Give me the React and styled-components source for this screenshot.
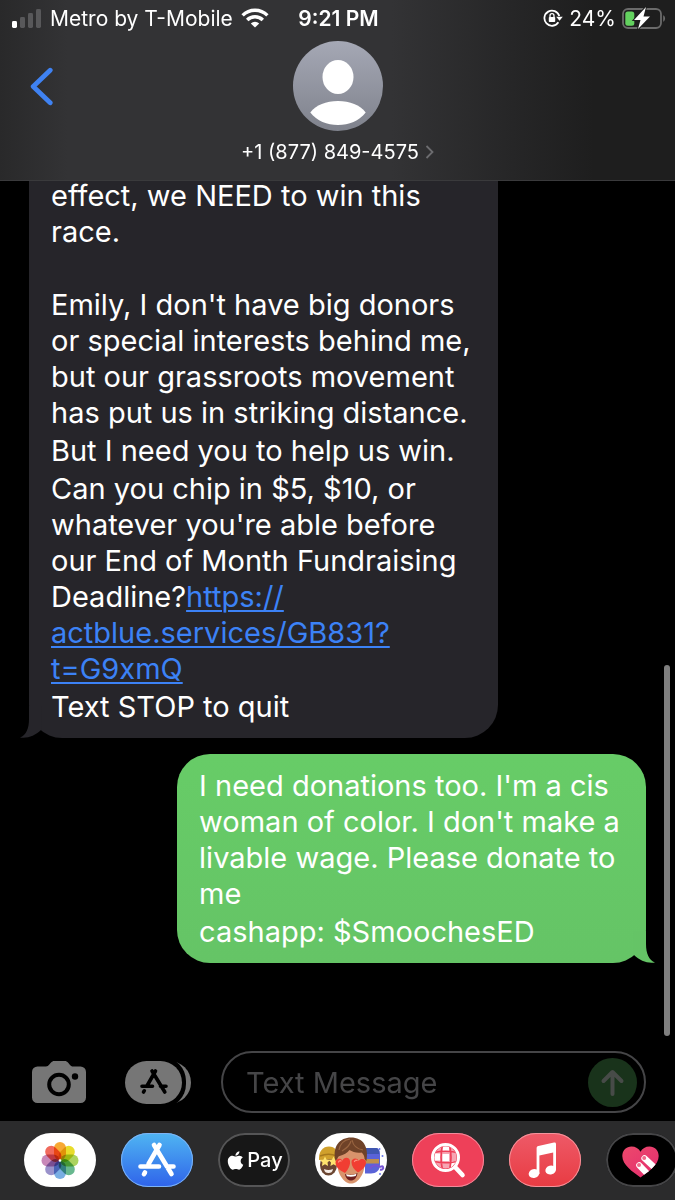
import { useState } from "react";
import styled, { createGlobalStyle } from "styled-components";
import { FaApple } from "react-icons/fa";

const GlobalStyle = createGlobalStyle`
  * {
    box-sizing: border-box;
  }
  body {
    margin: 0;
    background-color: #000;
    color: #fff;
    font-family: Inter, "Liberation Sans", sans-serif;
  }
  button {
    padding: 0;
    border: none;
    background: none;
    color: inherit;
    font-family: inherit;
    cursor: pointer;
  }
  svg {
    display: block;
    flex-shrink: 0;
  }
`;

const Screen = styled.main`
  display: flex;
  flex-direction: column;
  height: 100vh;
  overflow: hidden;
`;

const Header = styled.header`
  background: linear-gradient(
    to right,
    #29292a 0%,
    #333335 10%,
    #333335 58%,
    #262627 76%,
    #1e1e1e 88%,
    #1e1e1e 100%
  );
  border-bottom: 1px solid #3a3a3c;
`;

const StatusBar = styled.div`
  display: grid;
  grid-template-columns: 1fr auto 1fr;
  align-items: center;
  height: 36px;
  padding: 0 9px 0 11px;
  font-size: 21px;
`;

const StatusGroup = styled.div`
  display: flex;
  align-items: center;
  justify-content: ${(props) => (props.$end ? "flex-end" : "flex-start")};
  gap: ${(props) => (props.$end ? "6px" : "8px")};
  white-space: nowrap;
`;

const Clock = styled.time`
  font-weight: 600;
`;

const NavBar = styled.nav`
  display: grid;
  grid-template-columns: 1fr auto 1fr;
  align-items: start;
  padding: 5px 30px 15px;
`;

const BackButton = styled.button`
  justify-self: start;
  margin-top: 26px;
`;

const Contact = styled.button`
  display: flex;
  flex-direction: column;
  align-items: center;
  gap: 8px;
`;

const ContactName = styled.span`
  display: flex;
  align-items: center;
  gap: 6px;
  font-size: 20px;
  line-height: 26px;
`;

const Thread = styled.section`
  position: relative;
  flex: 1;
  min-height: 0;
  overflow: hidden;
  display: flex;
  flex-direction: column;
  justify-content: flex-end;
  gap: 16px;
  padding: 0 29px 80px;
`;

const Bubble = styled.article`
  position: relative;
  flex-shrink: 0;
  display: flex;
  flex-direction: column;
  gap: 2px;
  width: 76%;
  align-self: ${(props) => (props.$mine ? "flex-end" : "flex-start")};
  padding: 14px 22px 13px;
  border-radius: ${(props) => (props.$continued ? "0 0 33px 33px" : "33px")};
  background: ${(props) =>
    props.$mine ? "linear-gradient(#67cc67, #65c466)" : "#26252a"};
  font-size: 29px;
  line-height: 36px;
`;

const Text = styled.p`
  margin: ${(props) => (props.$spaced ? "35px 0 0" : "0")};
  white-space: pre-line;
`;

const MessageLink = styled.a`
  color: #3c82f6;
  text-decoration-thickness: 2px;
  text-underline-offset: 3px;
`;

const Tail = styled.svg`
  position: absolute;
  bottom: 0;
  ${(props) => (props.$mine ? "right: -9px;" : "left: -9px;")}
  transform: ${(props) => (props.$mine ? "scaleX(-1)" : "none")};
`;

const ScrollThumb = styled.div`
  position: absolute;
  right: 5px;
  bottom: 7px;
  width: 6px;
  height: 43%;
  border-radius: 3px;
  background-color: #7f7f7f;
`;

const Composer = styled.form`
  display: flex;
  align-items: center;
  gap: 30px;
  padding: 8px 29px 8px 32px;
`;

const ComposerTools = styled.div`
  display: flex;
  gap: 39px;
`;

const Field = styled.div`
  flex: 1;
  min-width: 0;
  display: flex;
  align-items: center;
  height: 62px;
  padding: 0 7px 0 23px;
  border: 2px solid #454547;
  border-radius: 31px;
`;

const MessageInput = styled.input`
  flex: 1;
  min-width: 0;
  padding: 0;
  border: none;
  outline: none;
  background: none;
  color: #fff;
  font-family: inherit;
  font-size: 29px;

  &::placeholder {
    color: #454547;
    opacity: 1;
  }
`;

const AppStrip = styled.div`
  display: flex;
  gap: 25px;
  overflow: hidden;
  padding: 12px 0 13px 24px;
  background-color: #2b2b2c;
`;

const AppButton = styled.button`
  flex-shrink: 0;
  display: flex;
  align-items: center;
  justify-content: center;
  gap: 1px;
  width: 72px;
  height: 54px;
  overflow: hidden;
  border-radius: 27px;
  background: ${(props) => props.$fill};
  box-shadow: inset 0 0 0 ${(props) => props.$edgeWidth || "1px"}
    ${(props) => props.$edge || "transparent"};
  font-size: 20px;
  font-weight: 500;
`;

const petals = [
  { color: "#f7a01e", turn: 0 },
  { color: "#e6d813", turn: 45 },
  { color: "#a3cf4c", turn: 90 },
  { color: "#57b083", turn: 135 },
  { color: "#6aa5e0", turn: 180 },
  { color: "#8f86c6", turn: 225 },
  { color: "#c27bb0", turn: 270 },
  { color: "#ef5a4b", turn: 315 },
];

const SignalIcon = () => (
  <svg width="31" height="20" viewBox="0 0 31 20" aria-hidden="true">
    <rect x="1" y="13" width="5" height="7" rx="1.4" fill="#fff" />
    <g fill="#58585a">
      <rect x="9" y="9" width="5" height="11" rx="1.4" />
      <rect x="17" y="5" width="5" height="15" rx="1.4" />
      <rect x="25" y="1" width="5" height="19" rx="1.4" />
    </g>
  </svg>
);

const WifiIcon = () => (
  <svg width="28" height="20" viewBox="0 0 28 20" aria-hidden="true">
    <g fill="none" stroke="#fff" strokeWidth="3.4">
      <path d="M1.6 7.4a17.5 17.5 0 0 1 24.8 0" />
      <path d="M6.2 12a11 11 0 0 1 15.6 0" />
    </g>
    <path d="M9.8 15.4a6 6 0 0 1 8.4 0L14 19.6z" fill="#fff" />
  </svg>
);

const RotationLockIcon = () => (
  <svg width="20" height="18" viewBox="0 0 20 18" aria-hidden="true">
    <path
      d="M15.4 13.3A7.6 7.6 0 1 1 16.3 7"
      fill="none"
      stroke="#fff"
      strokeWidth="1.8"
    />
    <path d="M13.2 7.7h6.6l-3.3 4.1z" fill="#fff" />
    <rect x="5.8" y="8" width="6.4" height="5" rx="0.8" fill="#fff" />
    <path
      d="M7 8.3V6.7a2 2 0 0 1 4 0v1.6"
      fill="none"
      stroke="#fff"
      strokeWidth="1.3"
    />
  </svg>
);

const BatteryIcon = () => (
  <svg width="44" height="24" viewBox="0 0 44 24" aria-hidden="true">
    <rect
      x="1"
      y="3"
      width="38"
      height="19"
      rx="5"
      fill="none"
      stroke="#6b6b6b"
      strokeWidth="1.8"
    />
    <path d="M41.2 9.3c2.5 1 2.5 5.4 0 6.4z" fill="#6b6b6b" />
    <rect x="3.3" y="5.4" width="9" height="14.4" rx="2.5" fill="#63d15f" />
    <path
      d="M24 1 12 14h6.5L16 23l12-12.5h-6.5z"
      fill="#fff"
      stroke="#1f1f1f"
      strokeWidth="2"
      paintOrder="stroke"
    />
  </svg>
);

const BackIcon = () => (
  <svg width="24" height="40" viewBox="0 0 24 40" aria-hidden="true">
    <path
      d="M20.2 3.2 3.2 19.5l17 16.3"
      fill="none"
      stroke="#3f82f2"
      strokeWidth="4.8"
      strokeLinecap="round"
      strokeLinejoin="round"
    />
  </svg>
);

const Avatar = () => (
  <svg width="90" height="90" viewBox="0 0 90 90" aria-hidden="true">
    <defs>
      <linearGradient id="avatarFill" x1="0" y1="0" x2="0" y2="1">
        <stop offset="0" stopColor="#a5a8b5" />
        <stop offset="1" stopColor="#7f828c" />
      </linearGradient>
    </defs>
    <circle cx="45" cy="45" r="45" fill="url(#avatarFill)" />
    <ellipse cx="45" cy="36" rx="15.5" ry="17" fill="#fff" />
    <path
      d="M17.3 71.5C23 64 33 60 45 60s22 4 27.7 11.5C66 80 56 84 45 84s-21-4-27.7-12.5z"
      fill="#fff"
    />
  </svg>
);

const DisclosureIcon = () => (
  <svg width="9" height="16" viewBox="0 0 9 16" aria-hidden="true">
    <path d="m1.5 2 6 6-6 6" fill="none" stroke="#6d6d70" strokeWidth="1.8" />
  </svg>
);

const BubbleTail = ({ $mine, color }) => (
  <Tail $mine={$mine} width="34" height="32" viewBox="0 0 34 32" aria-hidden="true">
    <path d="M9 0v13C9 23 6 29 0 31.5c8 1.2 15-2 21-7.5L22 0z" fill={color} />
  </Tail>
);

const CameraIcon = () => (
  <svg width="54" height="43" viewBox="0 0 54 43" aria-hidden="true">
    <path
      d="M5.5 5.5H14c1.5 0 2.3-.7 3.3-1.9l1.5-1.8C20 .5 20.8 0 22.5 0h10c1.7 0 2.7.5 3.7 1.7l1.6 2c1 1.2 1.8 1.8 3.3 1.8h7.4A5.5 5.5 0 0 1 54 11v25.5a5.5 5.5 0 0 1-5.5 5.5h-43A5.5 5.5 0 0 1 0 36.5V11a5.5 5.5 0 0 1 5.5-5.5z"
      fill="#767676"
    />
    <circle cx="27" cy="23.5" r="9.8" fill="none" stroke="#000" strokeWidth="4" />
    <circle cx="43" cy="15.5" r="3.2" fill="#000" />
  </svg>
);

const AppsIcon = () => (
  <svg width="66" height="43" viewBox="0 0 66 43" aria-hidden="true">
    <rect x="9" y="0" width="57" height="43" rx="21.5" fill="#767676" />
    <rect x="4" y="-4" width="57" height="51" rx="24" fill="#000" />
    <rect width="57" height="43" rx="21.5" fill="#767676" />
    <path
      d="m30.5 10-8.3 14.5M19.3 29.8l-.8 1.2M27 10l12.8 21M17 25.3h10.5M35.5 25.3H41"
      stroke="#000"
      strokeWidth="3.6"
      strokeLinecap="round"
    />
  </svg>
);

const SendIcon = () => (
  <svg width="49" height="49" viewBox="0 0 49 49" aria-hidden="true">
    <circle cx="24.5" cy="24.5" r="24.5" fill="#19331b" />
    <path
      d="M24.5 36V14.5M15.5 23l9-9 9 9"
      fill="none"
      stroke="#474b48"
      strokeWidth="4"
      strokeLinecap="round"
      strokeLinejoin="round"
    />
  </svg>
);

const Petal = styled.rect`
  mix-blend-mode: multiply;
`;

const PhotosIcon = () => (
  <svg width="72" height="54" viewBox="0 0 72 54" aria-hidden="true">
    {petals.map(({ color, turn }) => (
      <Petal
        key={color}
        x="30"
        y="9"
        width="12"
        height="18"
        rx="6"
        fill={color}
        opacity="0.9"
        transform={`rotate(${turn} 36 27.5)`}
      />
    ))}
    <circle cx="36" cy="27.5" r="1.3" fill="#fff" />
  </svg>
);

const AppStoreIcon = () => (
  <svg width="72" height="54" viewBox="0 0 72 54" aria-hidden="true">
    <path
      d="M38.5 12 27.5 31M24 39.5l-1 1.7M33 12l17.5 29M19.5 33.5H38M46 33.5h6.5"
      stroke="#fff"
      strokeWidth="4.6"
      strokeLinecap="round"
    />
  </svg>
);

const MemojiIcon = () => (
  <svg width="72" height="54" viewBox="0 0 72 54" aria-hidden="true">
    <ellipse cx="13.5" cy="32" rx="8.5" ry="10.5" fill="#6b4632" />
    <path d="M4 27C3.5 18 8 13.5 14 13.5S23 18 23 26z" fill="#d0a02c" />
    <path d="M5 23c5-2 12-2 17 0" fill="none" stroke="#a8791c" strokeWidth="1.5" />
    <path
      d="m10 23.5 1.5 3 3.5.5-2.5 2.4.6 3.5-3.1-1.6-3.1 1.6.6-3.5L5 27l3.5-.5z"
      fill="#ffe36e"
    />
    <path
      d="m18.5 23.5 1.5 3 3.5.5-2.5 2.4.6 3.5-3.1-1.6-3.1 1.6.6-3.5-2.5-2.4 3.5-.5z"
      fill="#ffe36e"
    />
    <path d="M9 36c3 1.2 6 1.2 9 0-.5 3-2 4-4.5 4S9.5 39 9 36z" fill="#f5ece6" />
    <path d="M50 15h11c2 0 4 2 4 5v12c0 5-4 8.5-9 8.5h-6z" fill="#5a63d8" />
    <path d="M50 15h11c1.500 0 2.500 1 3 3v3H50z" fill="#3f56b0" />
    <path d="M50 26h14v4.500H50z" fill="#c08f4c" />
    <path
      d="M55 36c1-3 5-5 8-3s4-1 5 1-1 3-3 2.5"
      fill="none"
      stroke="#7654d5"
      strokeWidth="2"
    />
    <g fill="#6676e8">
      <circle cx="64.5" cy="16" r="1" />
      <circle cx="67.5" cy="23" r="1" />
      <circle cx="65" cy="41" r="1" />
    </g>
    <path
      d="M22 22c0 12 1 18 5 23 3 4 5.5 5.5 9 5.5s6-1.500 9-5.5c4-5 5-11 5-23-3-8-25-9-28 0z"
      fill="#d8936c"
    />
    <path
      d="M20.5 28C17 13 25 4.5 36 4.5c12 0 18 9 15.5 23.5l-2-2c0-3-1-5-3-6.5-4 1-9-.5-12-2.5-2 3-6 5-10 6-1.500.5-2 2-2.500 3.5z"
      fill="#6f4228"
    />
    <path
      d="M35 6c-6 1-10 5-11 11M36 8c-1 4-4 7-9 10M37 7c1 5 5 9 11 10"
      fill="none"
      stroke="#996440"
      strokeWidth="1.2"
    />
    <path
      d="M30 40c-6-3-9.5-6-9.5-10.5 0-4 5-5 7-1.8 1-4 7-4.2 7.5.3C35.5 32.5 33 37 30 40z"
      fill="#f13d32"
    />
    <path
      d="M43 39.5c-4-3-6.5-6.5-6.5-10.5 0-4 6-4.7 7-1 2-3.3 8-2.5 7.5 2-.5 4-3.5 6.5-8 9.5z"
      fill="#f13d32"
    />
    <path
      d="M23.5 29c.5-1 1.500-1.500 2.500-1M39.5 28.5c.5-1 1.500-1.500 2.500-1"
      fill="none"
      stroke="#ff8d7c"
      strokeWidth="1.3"
      strokeLinecap="round"
    />
    <path d="M30 41c4 1.500 9 1 12.500-1-.5 5-3.500 7.500-6.500 7.500S30.500 45 30 41z" fill="#6c2020" />
    <path d="M31 41.2c3.5 1.300 7 1 10.500-.5l-.8 2.300c-3 1-6 1-8.800.3z" fill="#fff" />
  </svg>
);

const ImagesIcon = () => (
  <svg width="72" height="54" viewBox="0 0 72 54" aria-hidden="true">
    <defs>
      <clipPath id="lens">
        <circle cx="33.5" cy="24.5" r="11" />
      </clipPath>
    </defs>
    <g clipPath="url(#lens)" fill="#fff">
      <rect x="21" y="12" width="25" height="25" fill="#f7a5b3" />
      <rect x="30.5" y="12" width="6.5" height="7" />
      <rect x="22" y="20.5" width="7.5" height="7" />
      <rect x="30.5" y="21" width="6.5" height="7" />
      <rect x="38.5" y="28" width="7" height="6" />
      <path
        d="M22 19.5c7-1.5 16-1.5 23 0M22 28.5c7 1.5 16 1.5 23 0M30.5 12c-2 8-2 16 0 25M37.5 12c2 8 2 16 0 25"
        fill="none"
        stroke="#ee4059"
        strokeWidth="1.7"
      />
    </g>
    <circle cx="33.5" cy="24.5" r="13" fill="none" stroke="#fff" strokeWidth="3" />
    <path d="m43.5 34.5 7 7.5" stroke="#fff" strokeWidth="4.6" strokeLinecap="round" />
  </svg>
);

const MusicIcon = () => (
  <svg width="72" height="54" viewBox="0 0 72 54" aria-hidden="true">
    <path
      d="M27.6 15.2c0-1.3.6-2 1.8-2.3L45 9.6c1.300-.3 2 .3 2 1.5V37h-2.8V19.6l-13.8 3V41h-2.8z"
      fill="#fff"
    />
    <ellipse cx="25" cy="40.5" rx="5.4" ry="4.4" fill="#fff" transform="rotate(-15 25 40.5)" />
    <ellipse cx="41.7" cy="37" rx="5.4" ry="4.4" fill="#fff" transform="rotate(-15 41.7 37)" />
  </svg>
);

const DigitalTouchIcon = () => (
  <svg width="72" height="54" viewBox="0 0 72 54" aria-hidden="true">
    <defs>
      <linearGradient id="heartFill" x1="0" y1="0" x2="1" y2="1">
        <stop offset="0" stopColor="#f0566b" />
        <stop offset="1" stopColor="#e0206f" />
      </linearGradient>
      <clipPath id="heart">
        <path d="M34.5 44.5C27 39 16.3 32 16.3 23c0-6 4.2-9.6 9.2-9.6 4 0 7.3 2 9 5.3 1.7-3.3 5-5.3 9-5.3 5 0 9.2 3.6 9.2 9.6 0 9-10.7 16-18.2 21.5z" />
      </clipPath>
    </defs>
    <g clipPath="url(#heart)">
      <rect width="72" height="54" fill="url(#heartFill)" />
      <path
        d="m33.3 32.3 12 12.5M38.5 25.3l14 13"
        stroke="#fff"
        strokeWidth="6.2"
        strokeLinecap="round"
      />
      <g fill="#ef6b8a">
        <circle cx="33" cy="32" r="2" />
        <circle cx="38.2" cy="25" r="2" />
      </g>
    </g>
  </svg>
);

const apps = [
  { name: "Photos", fill: "#fff", Icon: PhotosIcon },
  {
    name: "App Store",
    fill: "linear-gradient(#4fb5f2, #2f63ea)",
    edge: "#7db4f5",
    Icon: AppStoreIcon,
  },
  { name: "Apple Pay", fill: "#171717", edge: "#555556", edgeWidth: "2px" },
  { name: "Memoji", fill: "#fff", Icon: MemojiIcon },
  { name: "Images", fill: "#ee4059", edge: "#f28b9b", Icon: ImagesIcon },
  {
    name: "Music",
    fill: "linear-gradient(#ee5a68, #e83b42)",
    edge: "#f3949c",
    Icon: MusicIcon,
  },
  {
    name: "Digital Touch",
    fill: "#000",
    edge: "#454547",
    edgeWidth: "2px",
    Icon: DigitalTouchIcon,
  },
];

export default function App() {
  const [draft, setDraft] = useState("");

  const onSend = (e) => {
    e.preventDefault();
    setDraft("");
  };

  return (
    <>
      <GlobalStyle />
      <Screen>
        <Header>
          <StatusBar>
            <StatusGroup>
              <SignalIcon />
              <span>Metro by T-Mobile</span>
              <WifiIcon />
            </StatusGroup>
            <Clock>9:21 PM</Clock>
            <StatusGroup $end>
              <RotationLockIcon />
              <span>24%</span>
              <BatteryIcon />
            </StatusGroup>
          </StatusBar>
          <NavBar>
            <BackButton type="button" aria-label="Back">
              <BackIcon />
            </BackButton>
            <Contact type="button">
              <Avatar />
              <ContactName>
                +1 (877) 849-4575
                <DisclosureIcon />
              </ContactName>
            </Contact>
          </NavBar>
        </Header>

        <Thread>
          <Bubble $continued>
            <Text>{"effect, we NEED to win this\nrace."}</Text>
            <Text $spaced>
              {
                "Emily, I don't have big donors\nor special interests behind me,\nbut our grassroots movement\nhas put us in striking distance."
              }
            </Text>
            <Text>But I need you to help us win.</Text>
            <Text>
              {
                "Can you chip in $5, $10, or\nwhatever you're able before\nour End of Month Fundraising\nDeadline?"
              }
              <MessageLink href="https://actblue.services/GB831?t=G9xmQ">
                {"https://\nactblue.services/GB831?\nt=G9xmQ"}
              </MessageLink>
            </Text>
            <Text>Text STOP to quit</Text>
            <BubbleTail color="#26252a" />
          </Bubble>
          <Bubble $mine>
            <Text>
              {
                "I need donations too. I'm a cis\nwoman of color. I don't make a\nlivable wage. Please donate to\nme"
              }
            </Text>
            <Text>cashapp: $SmoochesED</Text>
            <BubbleTail $mine color="#65c466" />
          </Bubble>
          <ScrollThumb />
        </Thread>

        <Composer onSubmit={onSend}>
          <ComposerTools>
            <button type="button" aria-label="Camera">
              <CameraIcon />
            </button>
            <button type="button" aria-label="Apps">
              <AppsIcon />
            </button>
          </ComposerTools>
          <Field>
            <MessageInput
              type="text"
              aria-label="Text Message"
              placeholder="Text Message"
              value={draft}
              onChange={(e) => setDraft(e.target.value)}
            />
            <button type="submit" aria-label="Send">
              <SendIcon />
            </button>
          </Field>
        </Composer>

        <AppStrip>
          {apps.map(({ name, fill, edge, edgeWidth, Icon }) => (
            <AppButton
              key={name}
              type="button"
              aria-label={name}
              $fill={fill}
              $edge={edge}
              $edgeWidth={edgeWidth}
            >
              {Icon ? (
                <Icon />
              ) : (
                <>
                  <FaApple size={21} />
                  <span>Pay</span>
                </>
              )}
            </AppButton>
          ))}
        </AppStrip>
      </Screen>
    </>
  );
}
